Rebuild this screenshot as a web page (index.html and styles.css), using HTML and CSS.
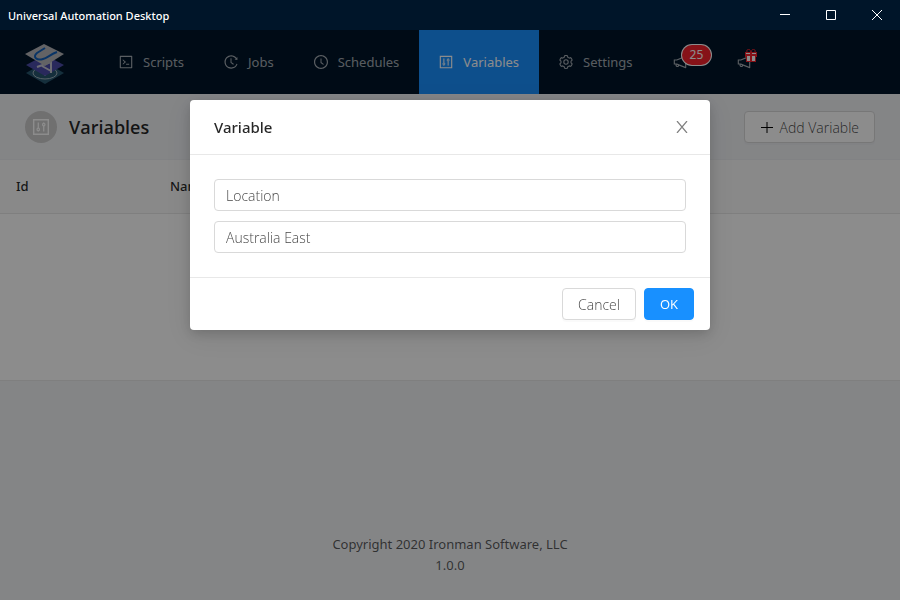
FILE: index.html
```html
<!DOCTYPE html>
<html lang="en">
<head>
<meta charset="utf-8">
<title>Universal Automation Desktop</title>
<link rel="stylesheet" href="styles.css">
</head>
<body>
<svg class="sprite" aria-hidden="true">
  <symbol id="i-code" viewBox="64 64 896 896"><path d="M516 673c0 4.400 3.400 8 7.500 8h185c4.100 0 7.500-3.600 7.500-8v-48c0-4.400-3.400-8-7.500-8h-185c-4.100 0-7.500 3.600-7.500 8v48zm-194.900 6.100l192-161c3.800-3.200 3.800-9.100 0-12.300l-192-160.900A7.950 7.950 0 0 0 308 351v62.700c0 2.400 1 4.600 2.900 6.100L420.700 512l-109.800 92.200a8.100 8.100 0 0 0-2.900 6.100V673c0 6.800 7.900 10.500 13.100 6.100zM880 112H144c-17.700 0-32 14.300-32 32v736c0 17.700 14.300 32 32 32h736c17.700 0 32-14.300 32-32V144c0-17.700-14.300-32-32-32zm-40 728H184V184h656v656z"/></symbol>
  <symbol id="i-history" viewBox="64 64 896 896"><path d="M536.1 273H488c-4.400 0-8 3.600-8 8v275.300c0 2.600 1.200 5 3.300 6.500l165.300 120.700c3.600 2.600 8.600 1.900 11.200-1.700l28.600-39c2.700-3.700 1.900-8.700-1.700-11.200L544.100 528.500V281c0-4.400-3.600-8-8-8zm219.800 75.200l156.800 38.300c5 1.200 9.900-2.600 9.900-7.700l.8-161.500c0-6.700-7.700-10.500-12.900-6.300L752.900 334.100a8 8 0 0 0 3 14.100zm167.700 301.100l-56.700-19.500a8 8 0 0 0-10.100 4.800c-1.900 5.100-3.900 10.100-6 15.100-17.800 42.100-43.300 80-75.900 112.500a353 353 0 0 1-112.500 75.900 352.180 352.180 0 0 1-137.700 27.800c-47.800 0-94.100-9.300-137.700-27.800a353 353 0 0 1-112.500-75.900c-32.500-32.500-58-70.400-75.900-112.500A353.440 353.440 0 0 1 171 512c0-47.800 9.300-94.200 27.800-137.800 17.800-42.100 43.300-80 75.900-112.500a353 353 0 0 1 112.500-75.900C430.600 167.300 477 158 524.800 158s94.100 9.300 137.700 27.800A353 353 0 0 1 775 261.700c10.200 10.300 19.800 21 28.600 32.300l59.800-46.800C784.700 146.600 662.200 81.900 524.600 82 285 82.100 92.600 276.700 95 516.400 97.400 751.900 288.900 942 524.800 942c185.500 0 343.500-117.600 403.700-282.300 1.500-4.200-.7-8.900-4.900-10.400z"/></symbol>
  <symbol id="i-clock" viewBox="64 64 896 896"><path d="M512 64C264.600 64 64 264.600 64 512s200.600 448 448 448 448-200.600 448-448S759.400 64 512 64zm0 820c-205.400 0-372-166.600-372-372s166.600-372 372-372 372 166.600 372 372-166.600 372-372 372z"/><path d="M686.700 638.600L544.100 535.500V288c0-4.400-3.600-8-8-8H488c-4.400 0-8 3.600-8 8v275.400c0 2.600 1.200 5 3.300 6.500l165.400 120.600c3.600 2.600 8.600 1.800 11.200-1.700l28.600-39c2.600-3.700 1.800-8.700-1.800-11.200z"/></symbol>
  <symbol id="i-control" viewBox="64 64 896 896"><g fill="none" stroke="currentColor" stroke-width="72"><path d="M148 148h728v728H148z"/><path stroke-width="64" d="M376 284v276m0 148v32M648 740V464m0-148v-32"/><circle cx="376" cy="634" r="62" stroke-width="60"/><circle cx="648" cy="390" r="62" stroke-width="60"/></g></symbol>
  <symbol id="i-setting" viewBox="64 64 896 896"><g fill="none" stroke="currentColor" stroke-width="76"><path transform="translate(41 41) scale(.92)" d="M924.800 625.700l-65.500-56c3.100-19 4.700-38.400 4.700-57.800s-1.600-38.800-4.700-57.800l65.500-56a32.030 32.030 0 0 0 9.300-35.200l-.9-2.600a443.740 443.740 0 0 0-79.700-137.900l-1.800-2.100a32.120 32.120 0 0 0-35.100-9.500l-81.300 28.900c-30-24.600-63.500-44-99.700-57.600l-15.700-85a32.050 32.050 0 0 0-25.800-25.700l-2.700-.5c-52.100-9.400-106.900-9.400-159 0l-2.700.5a32.050 32.050 0 0 0-25.800 25.700l-15.800 85.400a351.860 351.860 0 0 0-99 57.400l-81.900-29.100a32 32 0 0 0-35.100 9.500l-1.800 2.100a446.020 446.020 0 0 0-79.700 137.900l-.9 2.600c-4.500 12.500-.8 26.500 9.300 35.200l66.300 56.600c-3.100 18.800-4.600 38-4.600 57.100 0 19.200 1.500 38.400 4.600 57.100L99 625.500a32.030 32.030 0 0 0-9.300 35.200l.9 2.600c18.100 50.400 44.900 96.900 79.700 137.900l1.800 2.100a32.120 32.120 0 0 0 35.100 9.500l81.900-29.100c29.800 24.500 63.100 43.900 99 57.400l15.800 85.400a32.050 32.050 0 0 0 25.800 25.700l2.700.5a449.400 449.400 0 0 0 159 0l2.700-.5a32.050 32.050 0 0 0 25.800-25.700l15.700-85a350 350 0 0 0 99.700-57.600l81.300 28.900a32 32 0 0 0 35.100-9.500l1.800-2.100c34.800-41.100 61.600-87.500 79.700-137.900l.9-2.600c4.500-12.300.8-26.300-9.300-35z"/><circle cx="512" cy="512" r="140" stroke-width="70"/></g></symbol>
  <symbol id="i-horn" viewBox="64 64 896 896"><path d="M880 112c-3.800 0-7.700.7-11.600 2.300L292 345.900H128c-8.800 0-16 7.400-16 16.600v299c0 9.200 7.200 16.600 16 16.600h101.700c-3.700 11.600-5.700 23.900-5.700 36.400 0 65.900 53.800 119.500 120 119.500 55.400 0 102.100-37.600 115.900-88.400l408.600 164.200c3.900 1.500 7.800 2.300 11.600 2.300 16.900 0 32-14.200 32-33.200V145.200C912 126.200 897 112 880 112zM344 762.300c-26.500 0-48-21.400-48-47.800 0-11.200 3.900-21.900 11-30.400l84.900 34.100c-2 24.600-22.700 44.100-47.900 44.100zm496 58.400L318.800 611.300l-12.900-5.200H184V417.900h121.900l12.900-5.200L840 203.300v617.400z"/></symbol>
</svg>

<div class="app">
  <header class="titlebar">
    <span>Universal Automation Desktop</span>
    <div class="window-buttons">
      <button type="button" aria-label="Minimize"><svg viewBox="0 0 12 12"><path d="M1 5.500h10"/></svg></button>
      <button type="button" aria-label="Maximize"><svg viewBox="0 0 12 12"><path d="M1.500 1.500h9v9h-9z"/></svg></button>
      <button type="button" aria-label="Close"><svg viewBox="0 0 12 12"><path d="M1 1l10 10M11 1L1 11"/></svg></button>
    </div>
  </header>

  <nav class="menu">
    <a class="logo" href="#" aria-label="Home">
      <svg viewBox="0 0 40 40">
        <path fill="#27566e" d="M20 18L39 29 20 40 1 29z"/>
        <ellipse cx="20" cy="29" rx="12" ry="6" fill="none" stroke="#9fb3bd" stroke-width="1"/>
        <path d="M20 27v5" stroke="#b5c4cc" stroke-width="1.500"/>
        <path fill="#4b4ba8" d="M20 11l19 10-19 11L1 21z"/>
        <path d="M26 17v12M26 18L12 23M17 22l9 5" fill="none" stroke="#c5c5d2" stroke-width="2"/>
        <path fill="#b4b5b9" d="M19 0l20 10-19 12L0 10z"/>
        <path d="M20 4L12 9c-5 4 0 8 6 6 4-1 8-5 14-7" fill="none" stroke="#1260ba" stroke-width="2"/>
      </svg>
    </a>
    <a class="item" href="#"><svg><use href="#i-code"/></svg>Scripts</a>
    <a class="item" href="#"><svg><use href="#i-history"/></svg>Jobs</a>
    <a class="item" href="#"><svg><use href="#i-clock"/></svg>Schedules</a>
    <a class="item active" href="#" aria-current="page"><svg><use href="#i-control"/></svg>Variables</a>
    <a class="item" href="#"><svg><use href="#i-setting"/></svg>Settings</a>
    <a class="item" href="#" aria-label="News"><svg><use href="#i-horn"/></svg><span class="badge">25</span></a>
    <a class="item" href="#" aria-label="Offers"><svg><use href="#i-horn"/></svg><svg class="gift" viewBox="0 0 14 14"><path fill="#f5222d" d="M1 3h12v5H1zM2 7h10v6H2z"/><path fill="#fff" d="M3 7h3v5H3zM8 7h3v5H8zM2 4h4v1H2zM8 4h4v1H8z"/><path d="M7 3C6-1 2 0 3 3M7 3c1-4 5-3 4 0" fill="none" stroke="#f5222d" stroke-width="1"/></svg></a>
  </nav>

  <main>
    <div class="page-header">
      <span class="avatar"><svg><use href="#i-control"/></svg></span>
      <h1>Variables</h1>
      <button class="btn" type="button"><svg class="plus" viewBox="0 0 14 14"><path d="M7 2v11M1 7.500h12"/></svg>Add Variable</button>
    </div>
    <div class="card">
      <table>
        <thead><tr><th class="col-id">Id</th><th>Name</th></tr></thead>
      </table>
    </div>
  </main>

  <footer>Copyright 2020 Ironman Software, LLC<br>1.0.0</footer>
</div>

<div class="mask">
  <form class="modal" role="dialog" aria-labelledby="modal-title">
    <div class="modal-head">
      <h2 id="modal-title">Variable</h2>
      <button type="button" aria-label="Close"><svg viewBox="0 0 12 12"><path d="M1 0l10 12M11 0L1 12"/></svg></button>
    </div>
    <div class="modal-body">
      <input type="text" aria-label="Name" value="Location">
      <input type="text" aria-label="Value" value="Australia East">
    </div>
    <div class="modal-foot">
      <button class="btn" type="button">Cancel</button>
      <button class="btn primary" type="button">OK</button>
    </div>
  </form>
</div>
</body>
</html>
```
FILE: styles.css
```css
* { box-sizing: border-box; }

body {
  margin: 0;
  font: 13px/21px "Noto Sans", "Open Sans", sans-serif;
  color: rgba(0, 0, 0, 0.65);
  background: #f0f2f5;
}

h1, h2 { margin: 0; color: rgba(0, 0, 0, 0.85); }
button, input { font: inherit; }
svg { display: block; fill: currentColor; }
.sprite { position: absolute; width: 0; height: 0; }

.app { display: flex; flex-direction: column; min-height: 100vh; }

/* Window title bar */
.titlebar {
  display: flex;
  align-items: center;
  justify-content: space-between;
  height: 30px;
  padding-left: 8px;
  background: #001529;
  color: #fff;
  font-size: 11px;
  font-weight: 500;
}
.window-buttons { display: flex; }
.window-buttons button {
  display: grid;
  place-items: center;
  width: 46px;
  height: 30px;
  padding: 0;
  border: 0;
  background: none;
  color: #fff;
}
.window-buttons svg { width: 12px; height: 12px; stroke: currentColor; fill: none; }

/* Main menu */
.menu { display: flex; height: 64px; background: #001529; }
.logo { display: flex; align-items: center; padding: 4px 34px 0 25px; }
.logo svg { width: 40px; height: 40px; }
.item {
  position: relative;
  display: flex;
  align-items: center;
  gap: 10px;
  padding: 0 20px;
  color: rgba(255, 255, 255, 0.65);
  text-decoration: none;
}
.item svg { width: 14px; height: 14px; }
.item.active { background: #1890ff; color: #fff; }
.badge {
  position: absolute;
  top: 15px;
  left: 29px;
  height: 20px;
  padding: 0 8px;
  border-radius: 10px;
  background: #f5222d;
  box-shadow: 0 0 0 1px #fff;
  color: #fff;
  font-size: 12px;
  line-height: 20px;
}
.item .gift { position: absolute; top: 19px; left: 27px; }
.item[aria-label] { width: 64px; }

/* Page */
main { flex: 1; }
.page-header {
  display: flex;
  align-items: center;
  gap: 12px;
  padding: 17px 25px 16px;
  border-bottom: 1px solid #ebedf0;
}
.avatar {
  display: grid;
  place-items: center;
  width: 32px;
  height: 32px;
  border-radius: 50%;
  background: #ccc;
  color: #fff;
}
.avatar svg { width: 18px; height: 18px; }
h1 { font: 600 18px/32px "Open Sans", sans-serif; }
.page-header .btn { margin-left: auto; }

.card { min-height: 221px; background: #fff; border-bottom: 1px solid #e8e8e8; }
table { width: 100%; border-collapse: collapse; }
th {
  height: 53px;
  padding: 0 16px;
  border-bottom: 1px solid #e8e8e8;
  background: #fafafa;
  color: rgba(0, 0, 0, 0.85);
  font-weight: 500;
  text-align: left;
}
.col-id { width: 154px; }

footer { padding: 24px; text-align: center; }

.btn {
  display: flex;
  align-items: center;
  gap: 6px;
  height: 32px;
  padding: 0 15px;
  border: 1px solid #d9d9d9;
  border-radius: 4px;
  background: #fff;
  box-shadow: 0 2px 0 rgba(0, 0, 0, 0.02);
  color: rgba(0, 0, 0, 0.75);
  font-family: "Open Sans", sans-serif;
  font-size: 14px;
  font-weight: 300;
}
.btn.primary { border-color: #1890ff; background: #1890ff; color: #fff; font-size: 13px; font-weight: 400; }
.plus { width: 14px; height: 14px; stroke: #000; fill: none; }

/* Dialog */
.mask {
  position: fixed;
  inset: 30px 0 0;
  display: flex;
  align-items: flex-start;
  justify-content: center;
  padding-top: 70px;
  background: rgba(0, 0, 0, 0.45);
}
.modal {
  width: 100%;
  max-width: 520px;
  border-radius: 4px;
  background: #fff;
  box-shadow: 0 4px 12px rgba(0, 0, 0, 0.15), 0 6px 28px 4px rgba(0, 0, 0, 0.08);
}
.modal-head {
  display: flex;
  align-items: center;
  justify-content: space-between;
  padding: 16px 22px 16px 24px;
  border-bottom: 1px solid #e8e8e8;
}
h2 { font-size: 15px; line-height: 22px; font-weight: 500; }
.modal-head button { padding: 0; border: 0; background: none; color: rgba(0, 0, 0, 0.5); }
.modal-head svg { width: 12px; height: 12px; fill: none; stroke: currentColor; stroke-width: 1.200; }
.modal-body { display: flex; flex-direction: column; gap: 10px; padding: 24px; }
.modal-body input {
  width: 100%;
  height: 32px;
  padding: 1px 11px 0;
  border: 1px solid #d9d9d9;
  border-radius: 4px;
  background: #fff;
  color: rgba(0, 0, 0, 0.75);
  font-family: "Open Sans", sans-serif;
  font-size: 14px;
  font-weight: 300;
}
.modal-foot {
  display: flex;
  justify-content: flex-end;
  gap: 8px;
  padding: 10px 16px;
  border-top: 1px solid #e8e8e8;
}
```
